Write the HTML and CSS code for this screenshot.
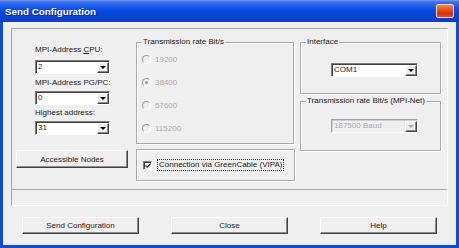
FILE: index.html
```html
<!DOCTYPE html>
<html>
<head>
<meta charset="utf-8">
<link rel="stylesheet" href="styles.css">
</head>
<body>
<div class="window">
  <div class="titlebar">
    <span class="title">Send Configuration</span>
    <span class="close"></span>
  </div>
  <div class="client">
    <div class="panel">
      <div class="main">
        <div class="col col-left">
          <div class="fields">
            <div class="label">MPI-Address <u>C</u>PU:</div>
            <div class="combo c1"><span class="val">2</span><span class="arrow"></span></div>
            <div class="label l2">MPI-Address PG/PC:</div>
            <div class="combo c2"><span class="val">0</span><span class="arrow"></span></div>
            <div class="label l3">Highest address:</div>
            <div class="combo c3"><span class="val">31</span><span class="arrow"></span></div>
          </div>
          <div class="btn btn-nodes">Accessible Nodes</div>
        </div>
        <div class="col col-mid">
          <div class="group group-rate">
            <span class="group-title">Transmission rate Bit/s</span>
            <div class="radio r1"><span class="rb"></span>19200</div>
            <div class="radio"><span class="rb on"></span>38400</div>
            <div class="radio"><span class="rb"></span>57600</div>
            <div class="radio"><span class="rb"></span>115200</div>
          </div>
          <div class="group group-conn">
            <span class="cb"><svg width="7" height="7" viewBox="0 0 7 7"><path d="M0.5 3 L2.5 5 L6.5 1 M0.5 4 L2.5 6 L6.5 2" stroke="#000" stroke-width="1" fill="none"/></svg></span>
            <span class="focus">Connection via GreenCable (VIPA)</span>
          </div>
        </div>
        <div class="col col-right">
          <div class="group group-if">
            <span class="group-title">Interface</span>
            <div class="combo wide c-if"><span class="val">COM1</span><span class="arrow"></span></div>
          </div>
          <div class="group group-net">
            <span class="group-title">Transmission rate Bit/s (MPI-Net)</span>
            <div class="combo wide disabled c-net"><span class="val">187500 Baud</span><span class="arrow"></span></div>
          </div>
        </div>
      </div>
      <div class="status"></div>
    </div>
    <div class="buttons">
      <div class="btn">Send Configuration</div>
      <div class="btn">Close</div>
      <div class="btn">Help</div>
    </div>
  </div>
</div>
</body>
</html>
```

FILE: styles.css
```css
* { box-sizing: border-box; }
body {
  margin: 0;
  background: #ffffff;
  font-family: "Liberation Sans", Arial, sans-serif;
  font-size: 8px;
  color: #1a1a1a;
}
.window {
  width: 459px;
  height: 248px;
  display: flex;
  flex-direction: column;
  background: #0d4ad6;
  overflow: hidden;
}
.titlebar {
  height: 22px;
  flex: none;
  display: flex;
  align-items: center;
  justify-content: space-between;
  padding: 0 5px 0 5px;
  background: linear-gradient(to bottom, #7f9ae4 0px, #3d70ef 2px, #2563ec 5px, #0b50e6 9px, #0646da 14px, #0a44cf 18px, #0a3cbc 21px, #0c40c4 22px);
}
.title {
  color: #ffffff;
  font-weight: bold;
  font-size: 9.8px;
  text-shadow: 1px 1px 0 #0a2a8a;
  margin-top: 1px;
}
.close {
  width: 18px;
  height: 14px;
  margin-top: -1px;
  border: 1px solid #f4d0b8;
  border-radius: 2px;
  background: linear-gradient(to bottom, #f08a4a 0%, #e4541e 40%, #d8300c 70%, #e04a20 100%);
}
.client {
  flex: 1;
  margin: 0 3px 3px 3px;
  background: #f0eff0;
  display: flex;
  flex-direction: column;
}
.panel {
  margin: 6px 0 0 8px;
  width: 437px;
  height: 178px;
  border: 1px solid;
  border-color: #a6a6a6 #ffffff #ffffff #a6a6a6;
  display: flex;
  flex-direction: column;
}
.main {
  height: 161px;
  display: flex;
  border-bottom: 1px solid #a6a6a6;
}
.status {
  flex: 1;
}
.col {
  display: flex;
  flex-direction: column;
}
.col-left {
  width: 124px;
  padding-top: 16px;
}
.fields {
  padding-left: 23px;
  display: flex;
  flex-direction: column;
}
.label {
  height: 10px;
  line-height: 10px;
  white-space: nowrap;
}
.l2 { margin-top: 4px; }
.l3 { margin-top: 3px; }
.combo {
  display: flex;
  width: 75px;
  height: 14px;
  background: #ffffff;
  border: 1px solid;
  border-color: #7c7c7c #ffffff #ffffff #7c7c7c;
  box-shadow: inset 1px 1px 0 #404040;
}
.c1 { margin-top: 5px; }
.c2 { margin-top: 3px; }
.c3 { margin-top: 3px; }
.combo .val {
  flex: 1;
  padding: 0 0 0 2px;
  line-height: 12px;
  white-space: nowrap;
  overflow: hidden;
}
.combo .arrow {
  width: 12px;
  margin: 1px 0 0 0;
  background: #f0eff0;
  border: 1px solid;
  border-color: #ffffff #404040 #404040 #ffffff;
  box-shadow: inset -1px -1px 0 #8a8a8a;
  display: flex;
  align-items: center;
  justify-content: center;
}
.combo .arrow::after {
  content: "";
  display: block;
  margin: 0 1px 0 0;
  border-style: solid;
  border-width: 3px 3px 0 3px;
  border-color: #000 transparent transparent transparent;
}
.combo.wide { width: 87px; }
.combo.disabled {
  background: #f0eff0;
  color: #a8a8a8;
  border-color: #a0a0a0 #ffffff #ffffff #a0a0a0;
  box-shadow: inset 1px 1px 0 #d0d0d0;
}
.combo.disabled .arrow::after {
  border-top-color: #a8a8a8;
}
.btn {
  display: flex;
  align-items: center;
  justify-content: center;
  background: #f0eff0;
  border: 1px solid;
  border-color: #ffffff #404040 #404040 #ffffff;
  box-shadow: inset -1px -1px 0 #8c8c8c;
  white-space: nowrap;
}
.btn-nodes {
  margin: 15px 0 0 4px;
  width: 112px;
  height: 18px;
}
.col-mid {
  width: 158px;
  padding-top: 13px;
}
.group {
  border: 1px solid #a9a9a9;
  box-shadow: 1px 1px 0 #ffffff, inset 1px 1px 0 #ffffff;
  display: flex;
  flex-direction: column;
  align-items: flex-start;
}
.group-title {
  margin: -6px 0 0 5px;
  padding: 0 1px;
  height: 10px;
  line-height: 10px;
  background: #f0eff0;
  white-space: nowrap;
}
.group-rate {
  height: 102px;
}
.radio {
  display: flex;
  align-items: center;
  height: 10px;
  margin: 13px 0 0 5px;
  color: #a8a8a8;
}
.radio.r1 { margin-top: 7px; }
.rb {
  width: 9px;
  height: 9px;
  border-radius: 50%;
  border: 1px solid;
  border-color: #9a9a9a #ffffff #ffffff #9a9a9a;
  background: #f0eff0;
  margin-right: 4px;
  display: flex;
  align-items: center;
  justify-content: center;
}
.rb.on::after {
  content: "";
  width: 3px;
  height: 3px;
  border-radius: 50%;
  background: #9a9a9a;
}
.group-conn {
  margin-top: 5px;
  height: 32px;
  width: 159px;
  flex-direction: row;
  align-items: center;
  padding-left: 6px;
}
.cb {
  width: 9px;
  height: 9px;
  background: #ffffff;
  border: 1px solid;
  border-color: #7c7c7c #ffffff #ffffff #7c7c7c;
  box-shadow: inset 1px 1px 0 #404040;
  display: flex;
  align-items: center;
  justify-content: center;
  margin-right: 5px;
}
.cb svg { display: block; margin: 1px 0 0 1px; }
.focus {
  border: 1px dotted #333;
  padding: 0 1px;
  line-height: 10px;
  white-space: nowrap;
}
.col-right {
  width: 141px;
  margin-left: 6px;
  padding-top: 13px;
}
.group-if {
  height: 52px;
}
.c-if { margin: 16px 0 0 30px; }
.group-net {
  margin-top: 7px;
  height: 50px;
}
.c-net { margin: 13px 0 0 30px; }
.buttons {
  display: flex;
  gap: 32px;
  margin-top: 11px;
  padding-left: 19px;
}
.buttons .btn {
  width: 117px;
  height: 17px;
}
```
